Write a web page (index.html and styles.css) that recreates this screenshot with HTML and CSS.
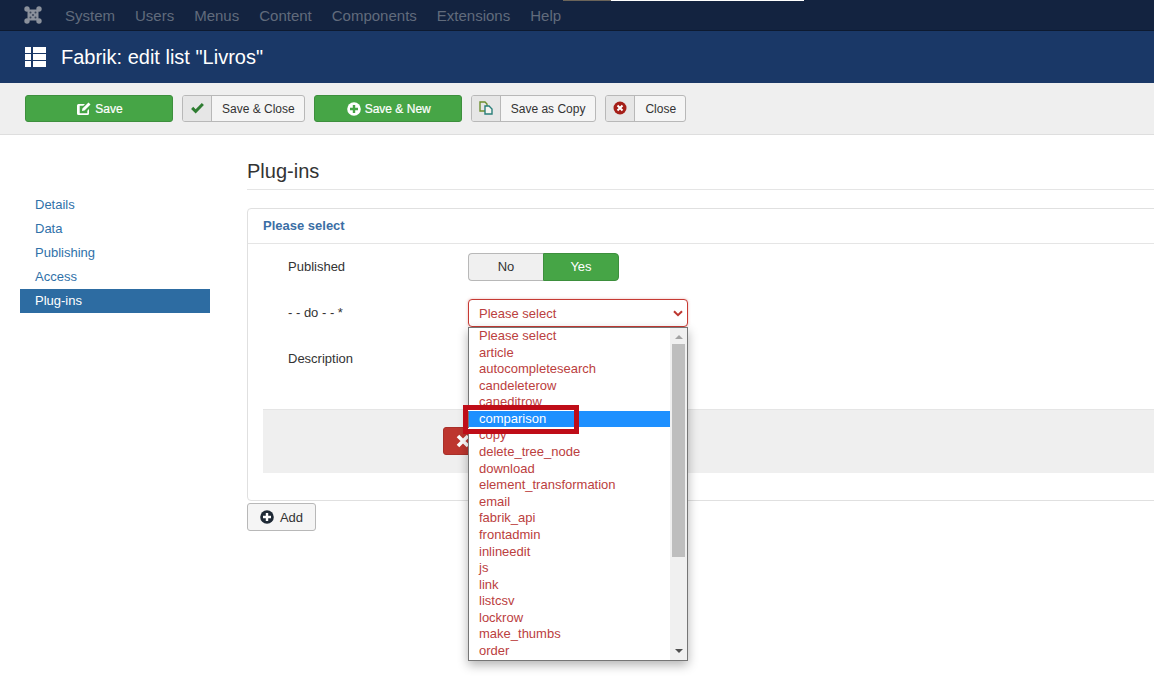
FILE: index.html
```html
<!DOCTYPE html>
<html lang="en">
<head>
<meta charset="utf-8">
<title>Fabrik: edit list "Livros"</title>
<link rel="stylesheet" href="styles.css">
</head>
<body>
<div class="capture-strip"><span class="strip-dark"></span><span class="strip-light"></span></div>
<nav class="topbar">
  <svg class="joomla" viewBox="0 0 18 18" width="18" height="18"><g fill="#8b919c"><rect x="3.500" y="3.500" width="11" height="11" rx="1"/><circle cx="3" cy="3" r="2.700"/><circle cx="15" cy="3" r="2.700"/><circle cx="3" cy="15" r="2.700"/><circle cx="15" cy="15" r="2.700"/></g><g fill="#3a4558"><circle cx="6.500" cy="6.500" r="1"/><circle cx="11.500" cy="6.500" r="1"/><circle cx="6.500" cy="11.500" r="1"/><circle cx="11.500" cy="11.500" r="1"/><circle cx="9" cy="9" r="1"/></g></svg>
  <a class="top-link">System</a>
  <a class="top-link">Users</a>
  <a class="top-link">Menus</a>
  <a class="top-link">Content</a>
  <a class="top-link">Components</a>
  <a class="top-link">Extensions</a>
  <a class="top-link">Help</a>
</nav>
<header class="titlebar">
  <svg class="title-icon" viewBox="0 0 21 20" width="21" height="20"><path fill="#fff" d="M0 0h6v6H0zM8 0h13v6H8zM0 7h6v6H0zM8 7h13v6H8zM0 14h6v6H0zM8 14h13v6H8z"/></svg>
  <h1 class="page-title">Fabrik: edit list "Livros"</h1>
</header>
<div class="toolbar">
  <button class="btn-save btn-wide">
    <svg class="ico" viewBox="0 0 14 14" width="14" height="14"><path fill="#fff" d="M1.500 2H8L6.300 3.700H2.700v7.600h7.600V8.700L12 7v4.500A1.500 1.500 0 0 1 10.500 13h-9A1.500 1.500 0 0 1 0 11.500v-8A1.500 1.500 0 0 1 1.500 2ZM11.500.6l2 2L7.500 8.600 5 9l.4-2.500Z"/></svg>Save</button>
  <button class="btn-split">
    <span class="split-icon"><svg viewBox="0 0 14 12" width="13" height="11"><path fill="#2f7d32" d="M0 6.500 2.300 4.200 5 6.900 11.700 0 14 2.300 5 11.500Z"/></svg></span><span class="split-label">Save &amp; Close</span></button>
  <button class="btn-save btn-wide">
    <svg class="ico" viewBox="0 0 14 14" width="14" height="14"><circle cx="7" cy="7" r="6.800" fill="#fff"/><path fill="#46a546" d="M5.800 3h2.400v2.800H11v2.400H8.200V11H5.800V8.200H3V5.800h2.800Z"/></svg>Save &amp; New</button>
  <button class="btn-split">
    <span class="split-icon"><svg viewBox="0 0 14 14" width="14" height="14" fill="none" stroke-width="1.400"><path stroke="#6d8f2f" d="M1 1h5l2 2v7H1z"/><path stroke="#2a7f7a" fill="#f4f4f0" d="M6 5h4l3 3v5H6z"/></svg></span><span class="split-label split-label-wide">Save as Copy</span></button>
  <button class="btn-split">
    <span class="split-icon"><svg viewBox="0 0 14 14" width="14" height="14"><circle cx="7" cy="7" r="6.500" fill="#a51f18"/><path stroke="#fff" stroke-width="2" d="M4.500 4.500l5 5M9.500 4.500l-5 5"/></svg></span><span class="split-label">Close</span></button>
</div>
<main class="layout">
  <aside class="sidebar">
    <a class="side-link">Details</a>
    <a class="side-link">Data</a>
    <a class="side-link">Publishing</a>
    <a class="side-link">Access</a>
    <a class="side-link side-active">Plug-ins</a>
  </aside>
  <section class="content">
    <h2 class="section-title">Plug-ins</h2>
    <div class="panel">
      <div class="panel-head">Please select</div>
      <div class="panel-body">
        <div class="row row-pub">
          <span class="label">Published</span>
          <div class="toggle"><span class="toggle-no">No</span><span class="toggle-yes">Yes</span></div>
        </div>
        <div class="row row-do">
          <span class="label">- - do - - *</span>
          <div class="select-wrap">
            <div class="select">Please select<svg class="chev" viewBox="0 0 10 7" width="10" height="7"><path d="M1 1.200 5 5.200 9 1.200" fill="none" stroke="#bd362f" stroke-width="2"/></svg></div>
            <div class="dropdown">
              <ul class="options">
                <li>Please select</li><li>article</li><li>autocompletesearch</li><li>candeleterow</li><li>caneditrow</li><li class="opt-selected">comparison</li><li>copy</li><li>delete_tree_node</li><li>download</li><li>element_transformation</li><li>email</li><li>fabrik_api</li><li>frontadmin</li><li>inlineedit</li><li>js</li><li>link</li><li>listcsv</li><li>lockrow</li><li>make_thumbs</li><li>order</li>
              </ul>
              <div class="scrollbar">
                <span class="arrow-up"></span>
                <div class="track"><div class="thumb"></div></div>
                <span class="arrow-down"></span>
              </div>
            </div>
            <div class="marker"></div>
          </div>
        </div>
        <div class="row row-desc"><span class="label">Description</span></div>
        <div class="band"><button class="btn-delete"><svg viewBox="0 0 14 14" width="14" height="14"><path stroke="#fff" stroke-width="3.600" d="M2 2l10 10M12 2 2 12"/></svg></button></div>
      </div>
    </div>
    <button class="btn-add"><svg viewBox="0 0 14 14" width="14" height="14"><circle cx="7" cy="7" r="6.800" fill="#1f2a36"/><path fill="#fff" d="M5.800 3h2.400v2.800H11v2.400H8.200V11H5.800V8.200H3V5.800h2.800Z"/></svg>Add</button>
  </section>
</main>
</body>
</html>
```
FILE: styles.css
```css
* { box-sizing: border-box; }
html, body { margin: 0; padding: 0; height: 676px; overflow: hidden; background: #fff; }
body { font-family: "Liberation Sans", Arial, sans-serif; font-size: 13px; color: #333; }

.capture-strip { position: absolute; top: 0; left: 563px; display: flex; height: 1px; }
.strip-dark { width: 48px; background: #6b6459; }
.strip-light { width: 193px; background: #fff; }

.topbar { height: 31px; background: #132340; border-bottom: 1px solid #0d1a30; display: flex; align-items: center; padding-left: 24px; }
.joomla { margin-right: 23px; flex: none; }
.top-link { color: #616b7c; margin-right: 20px; font-size: 15px; }

.titlebar { height: 52px; background: #1a3867; display: flex; align-items: center; padding-left: 25px; }
.title-icon { margin-right: 15px; flex: none; }
.page-title { margin: 0; color: #fff; font-size: 20px; font-weight: 400; }

.toolbar { height: 52px; background: #efefef; border-bottom: 1px solid #dedede; display: flex; align-items: center; padding: 0 0 1px 25px; gap: 9px; }
button { font-family: inherit; font-size: 12px; cursor: pointer; }
.btn-save { height: 27px; background: #46a546; border: 1px solid #3d8f3d; border-radius: 3px; color: #fff; display: flex; align-items: center; justify-content: center; gap: 4px; padding: 1px 0 0 2px; -webkit-text-stroke: 0.2px #fff; }
.btn-wide { width: 148px; }
.btn-split { height: 27px; padding: 0; background: #f5f5f5; border: 1px solid #b8b8b8; border-radius: 3px; color: #333; display: flex; align-items: stretch; }
.split-icon { width: 29px; background: #e6e6e6; border-right: 1px solid #b8b8b8; display: flex; align-items: center; justify-content: center; border-radius: 2px 0 0 2px; }
.split-label { padding: 1px 9px 0 10px; line-height: 25px; }
.split-label-wide { padding-right: 10px; }

.layout { display: flex; padding-left: 20px; }
.sidebar { width: 190px; margin-top: 58px; flex: none; display: flex; flex-direction: column; }
.side-link { height: 24px; line-height: 23px; padding-left: 15px; color: #3071a9; }
.side-active { background: #2d6ca2; color: #fff; }

.content { margin-left: 37px; flex: 1; min-width: 0; margin-right: -10px; }
.section-title { margin: 0; height: 55px; padding-top: 24px; line-height: 25px; font-size: 20px; font-weight: 400; color: #333; border-bottom: 1px solid #e5e5e5; }
.panel { margin-top: 18px; height: 293px; border: 1px solid #e0e0e0; border-radius: 4px; }
.panel-head { height: 35px; line-height: 33px; padding-left: 15px; border-bottom: 1px solid #e5e5e5; font-size: 13px; font-weight: 700; color: #3b6ea5; }
.panel-body { padding: 9px 0 0 15px; }
.row { display: flex; }
.label { width: 205px; padding-left: 25px; flex: none; line-height: 27px; }
.row-pub { height: 46px; }
.row-do { height: 46px; }
.row-desc { height: 64px; }

.toggle { display: flex; height: 28px; }
.toggle-no { width: 75px; background: #f0f0f0; border: 1px solid #b8b8b8; border-right: 0; border-radius: 4px 0 0 4px; text-align: center; line-height: 26px; }
.toggle-yes { width: 76px; background: #46a546; border: 1px solid #3d8f3d; border-radius: 0 4px 4px 0; color: #fff; text-align: center; line-height: 26px; }

.select-wrap { position: relative; }
.select { width: 220px; height: 28px; border: 1px solid #c63a33; border-radius: 4px; color: #bb4040; line-height: 27px; padding-left: 10px; position: relative; background: #fff; box-shadow: 0 0 3px rgba(189,54,47,.35); }
.chev { position: absolute; right: 4px; top: 10px; }

.dropdown { position: absolute; left: 0; top: 28px; width: 220px; height: 334px; background: #fff; border: 1px solid #767676; box-shadow: 0 4px 10px rgba(0,0,0,.3); display: flex; overflow: hidden; z-index: 2; }
.options { list-style: none; margin: 0; padding: 0; width: 201px; flex: none; color: #bb4040; }
.options li { height: 16.590px; line-height: 16.590px; padding-left: 10px; white-space: nowrap; }
.options .opt-selected { background: #1e90ff; color: #fff; }
.scrollbar { width: 17px; background: #f0f0f0; display: flex; flex-direction: column; align-items: center; }
.arrow-up { width: 0; height: 0; margin: 7px 0 5px; border: 4px solid transparent; border-top: 0; border-bottom: 4px solid #a3a3a3; }
.track { flex: 1; width: 100%; padding: 0 2px; }
.thumb { height: 213px; background: #bebebe; }
.arrow-down { width: 0; height: 0; margin: 5px 0 7px; border: 4px solid transparent; border-bottom: 0; border-top: 4px solid #505050; }

.marker { position: absolute; left: -5px; top: 106px; width: 116px; height: 29px; border: 5px solid #bf0d18; box-shadow: inset 0 1px #fff, inset 0 -1px #fff; z-index: 3; }

.band { height: 64px; background: #efefef; border-top: 1px solid #e5e5e5; padding: 17px 0 0 180px; }
.btn-delete { width: 60px; height: 28px; padding: 0 0 0 12px; background: #bd362f; border: 1px solid #a8302a; border-radius: 3px; display: flex; align-items: center; }

.btn-add { margin-top: 2px; width: 69px; height: 28px; padding: 0; background: #f5f5f5; border: 1px solid #b8b8b8; border-radius: 3px; color: #333; font-size: 13px; display: flex; align-items: center; justify-content: center; gap: 6px; }
```
